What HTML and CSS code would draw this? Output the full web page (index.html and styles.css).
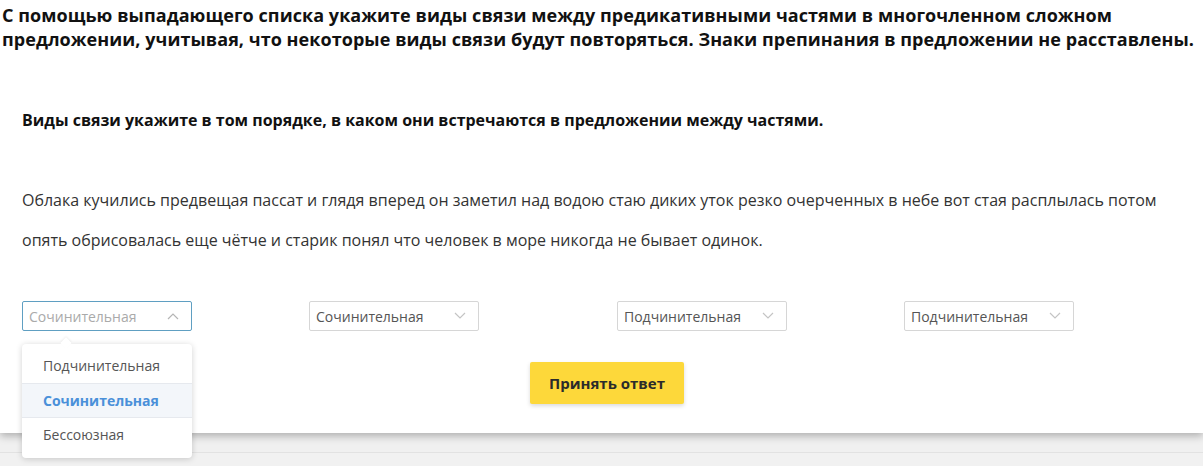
FILE: index.html
```html
<!DOCTYPE html>
<html lang="ru">
<head>
<meta charset="utf-8">
<link rel="stylesheet" href="styles.css">
</head>
<body>
<div class="card">
  <h1 class="title">С помощью выпадающего списка укажите виды связи между предикативными частями в многочленном сложном предложении, учитывая, что некоторые виды связи будут повторяться. Знаки препинания в предложении не расставлены.</h1>
  <p class="hint">Виды связи укажите в том порядке, в каком они встречаются в предложении между частями.</p>
  <p class="text">Облака кучились предвещая пассат и глядя вперед он заметил над водою стаю диких уток резко очерченных в небе вот стая расплылась потом опять обрисовалась еще чётче и старик понял что человек в море никогда не бывает одинок.</p>
  <div class="selects">
    <div class="select select-open s1">
      <span class="placeholder">Сочинительная</span>
      <svg class="chev" width="12" height="8" viewBox="0 0 12 8"><path d="M1 7 L6 2 L11 7" fill="none" stroke="#b5b5b5" stroke-width="1.2"/></svg>
      <div class="menu">
        <div class="item">Подчинительная</div>
        <div class="item active">Сочинительная</div>
        <div class="item">Бессоюзная</div>
      </div>
    </div>
    <div class="select s2">
      <span class="value">Сочинительная</span>
      <svg class="chev" width="12" height="8" viewBox="0 0 12 8"><path d="M1 1 L6 6 L11 1" fill="none" stroke="#c4c4c4" stroke-width="1.2"/></svg>
    </div>
    <div class="select s3">
      <span class="value">Подчинительная</span>
      <svg class="chev" width="12" height="8" viewBox="0 0 12 8"><path d="M1 1 L6 6 L11 1" fill="none" stroke="#c4c4c4" stroke-width="1.2"/></svg>
    </div>
    <div class="select s4">
      <span class="value">Подчинительная</span>
      <svg class="chev" width="12" height="8" viewBox="0 0 12 8"><path d="M1 1 L6 6 L11 1" fill="none" stroke="#c4c4c4" stroke-width="1.2"/></svg>
    </div>
  </div>
  <div class="actions">
    <button class="btn">Принять ответ</button>
  </div>
</div>
<div class="footer"></div>
</body>
</html>
```
FILE: styles.css
```css
html, body {
  margin: 0;
  padding: 0;
}
body {
  background: #f1f1f1;
  font-family: "Open Sans", "Noto Sans", sans-serif;
  height: 466px;
  overflow: hidden;
}
.card {
  background: #fff;
  height: 433px;
  box-sizing: border-box;
  padding: 1px 0 0 0;
  box-shadow: 0 3px 8px rgba(0,0,0,0.28);
  position: relative;
  z-index: 1;
}
.title {
  margin: 2px 0 0 2px;
  font-size: 18px;
  line-height: 24px;
  font-weight: 700;
  color: #111;
  letter-spacing: 0.06px;
}
.hint {
  margin: 58px 0 0 22px;
  font-size: 16px;
  line-height: 22px;
  font-weight: 700;
  color: #111;
}
.text {
  margin: 49px 0 0 22px;
  font-size: 16px;
  line-height: 40px;
  color: #333;
  width: 1165px;
}
.selects {
  display: flex;
  margin: 41px 0 0 22px;
}
.select {
  position: relative;
  width: 170px;
  height: 30px;
  box-sizing: border-box;
  border: 1px solid #d6d6d6;
  border-radius: 2px;
  display: flex;
  align-items: center;
  justify-content: space-between;
  padding: 0 12px 0 6px;
  font-size: 14px;
  color: #555;
}
.s2 { margin-left: 117px; }
.s3 { margin-left: 138px; }
.s4 { margin-left: 117px; }
.select-open {
  border-color: #5f9fc2;
}
.placeholder {
  color: #aaa;
}
.value {
  color: #555;
}
.menu {
  position: absolute;
  left: -1px;
  top: 42px;
  width: 170px;
  background: #fff;
  border-radius: 4px;
  box-shadow: 0 1px 6px rgba(0,0,0,0.18);
  padding: 5px 0 7px;
  z-index: 5;
}
.menu::before {
  content: "";
  position: absolute;
  left: 40px;
  top: -5px;
  width: 8px;
  height: 8px;
  background: #fff;
  transform: rotate(45deg);
  box-shadow: -1px -1px 2px rgba(0,0,0,0.06);
}
.item {
  position: relative;
  height: 34px;
  line-height: 34px;
  padding-left: 21px;
  font-size: 14px;
  color: #555;
}
.item + .item {
  border-top: 1px solid #e6e9ee;
  height: 33px;
}
.item.active {
  background: #f3f6fa;
  color: #4a90d9;
  font-weight: 700;
}
.actions {
  display: flex;
  justify-content: center;
  margin-top: 31px;
  padding-left: 11px;
}
.btn {
  width: 154px;
  height: 42px;
  background: #fdd83a;
  border: none;
  border-radius: 2px;
  box-shadow: 0 2px 4px rgba(0,0,0,0.15);
  font-family: "Open Sans", "Noto Sans", sans-serif;
  font-size: 15px;
  font-weight: 700;
  color: #2b2b2b;
}
.footer {
  height: 19px;
  border-bottom: 1px solid #e2e2e2;
  background: #f0f0f0;
}
```
